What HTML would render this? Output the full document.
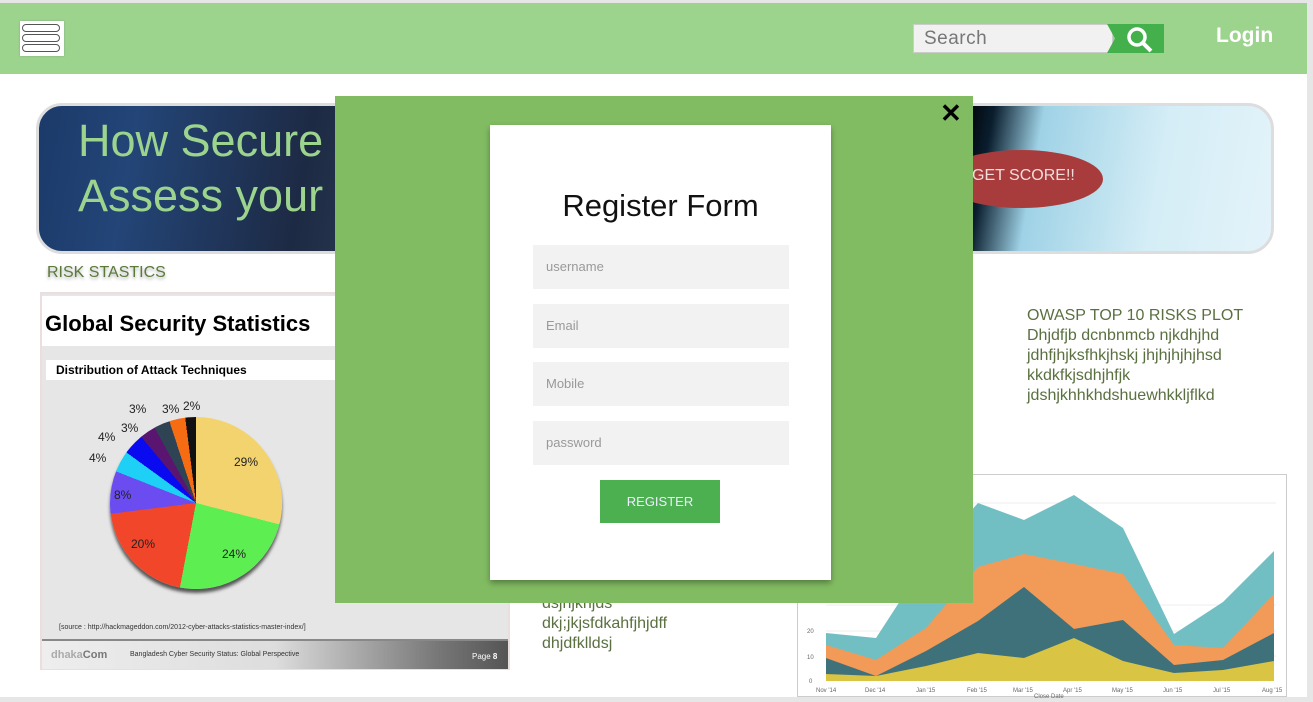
<!DOCTYPE html>
<html><head><meta charset="utf-8"><style>
*{margin:0;padding:0;box-sizing:border-box}
body{width:1313px;height:702px;overflow:hidden;background:#e6e6e6;font-family:"Liberation Sans",sans-serif;position:relative}
.page{position:absolute;left:0;top:3px;width:1307px;height:694px;background:#fff}
.hdr{position:absolute;left:0;top:3px;width:1307px;height:71px;background:#9cd48e}
.ham{position:absolute;left:20px;top:21px;width:44px;height:35px;background:#fff;box-shadow:0 0 2px #8a8}
.ham i{position:absolute;left:2px;width:38px;height:8px;border:1.5px solid #555;border-radius:5px}
.search{position:absolute;left:913px;top:24px;width:200px;height:29px;background:#f1f1f1;border:1px solid #ccc;color:#777;font-size:19px;padding:3px 10px;letter-spacing:.5px}
.sbtn{position:absolute;left:1107px;top:24px;width:57px;height:29px;background:#44b04b;clip-path:polygon(0 0,100% 0,100% 100%,0 100%,8px 50%)}
.login{position:absolute;left:1216px;top:24px;color:#fff;font-size:21px;font-weight:bold}
.banner{position:absolute;left:36px;top:103px;width:1238px;height:151px;border:3px solid #ddd;border-radius:26px;overflow:hidden;background:linear-gradient(100deg,#1b3a6a 0%,#234577 8%,#1d2a44 22%,#3a4660 35%,#14253f 55%,#0a1a2c 68%,#02060c 74%,#0a1e2e 76%,#9fd2e6 80%,#d4edf6 90%,#e4f3fa 100%)}
.btitle{position:absolute;left:78px;top:113px;color:#9cd48e;font-size:45px;line-height:55px}
.score{position:absolute;left:940px;top:150px;width:163px;height:58px;border-radius:50%;background:#a83c3c;color:#f3dcdc;font-size:16px;padding:17px 0 0 32px}
.risk{position:absolute;left:47px;top:264px;color:#5a7a3a;font-size:16px;text-shadow:0 2px 3px #aaa}
.slide{position:absolute;left:40px;top:292px;width:470px;height:378px;background:#e6e6e6;border:2px solid #eadede}
.owasp{position:absolute;left:1027px;top:306px;color:#5a7040;font-size:16px;line-height:20px}
.under{position:absolute;left:542px;top:594px;color:#5a7040;font-size:16px;line-height:20px}
.chart{position:absolute;left:797px;top:474px;width:490px;height:223px;border:1px solid #ccc;background:#fff}
.modal{position:absolute;left:335px;top:96px;width:638px;height:507px;background:#82bc62}
.close{position:absolute;left:940px;top:98px;font-size:26px;font-weight:bold;color:#000}
.card{position:absolute;left:490px;top:125px;width:341px;height:455px;background:#fff;box-shadow:0 3px 6px rgba(0,0,0,.35)}
.card h2{position:absolute;top:63px;width:100%;text-align:center;font-weight:normal;font-size:31px;color:#111}
.inp{position:absolute;left:43px;width:256px;height:44px;background:#f2f2f2;color:#999;font-size:13px;padding:14px 13px}
.reg{position:absolute;left:110px;top:355px;width:120px;height:43px;background:#4caf50;color:#eef;font-size:13px;text-align:center;line-height:43px}
</style></head><body>
<div class="page"></div>
<div class="hdr"></div>
<div class="ham"><i style="top:3px"></i><i style="top:13px"></i><i style="top:23px"></i></div>
<div class="search">Search</div>
<div class="sbtn"><svg width="57" height="29"><circle cx="30" cy="13" r="8" fill="none" stroke="#fff" stroke-width="3.5"/><line x1="36" y1="19" x2="44" y2="27" stroke="#fff" stroke-width="4"/></svg></div>
<div class="login">Login</div>
<div class="banner"></div>
<div class="btitle">How Secure<br>Assess your</div>
<div class="score">GET SCORE!!</div>
<div class="risk">RISK STASTICS</div>
<div class="slide">
 <div style="position:absolute;left:0;top:2px;width:300px;height:50px;background:#fff;font-weight:bold;font-size:22px;padding:15px 3px">Global Security Statistics</div>
 <div style="position:absolute;left:4px;top:66px;width:300px;height:20px;background:#fff;font-weight:bold;font-size:12px;padding:3px 10px">Distribution of Attack Techniques</div>
 <div style="position:absolute;left:68px;top:123px;width:172px;height:172px;border-radius:50%;box-shadow:0 4px 3px #555;background:conic-gradient(#f2d36e 0 29%,#5def52 29% 53%,#f2462b 53% 73%,#6a4cf0 73% 81%,#1ed0f5 81% 85%,#0a0af0 85% 89%,#5a1570 89% 92%,#2e4455 92% 95%,#f56c12 95% 98%,#111 98% 100%)"></div>
 <div style="position:absolute;font-size:12px;color:#222">
  <span style="position:absolute;left:192px;top:161px">29%</span>
  <span style="position:absolute;left:180px;top:253px">24%</span>
  <span style="position:absolute;left:89px;top:243px">20%</span>
  <span style="position:absolute;left:72px;top:194px">8%</span>
  <span style="position:absolute;left:47px;top:157px">4%</span>
  <span style="position:absolute;left:56px;top:136px">4%</span>
  <span style="position:absolute;left:79px;top:127px">3%</span>
  <span style="position:absolute;left:87px;top:108px">3%</span>
  <span style="position:absolute;left:120px;top:108px">3%</span>
  <span style="position:absolute;left:141px;top:105px">2%</span>
 </div>
 <div style="position:absolute;left:17px;top:330px;font-size:7px;color:#333">[source : http://hackmageddon.com/2012-cyber-attacks-statistics-master-index/]</div>
 <div style="position:absolute;left:0;top:345px;width:466px;height:30px;background:linear-gradient(90deg,#eee 0%,#ddd 50%,#777 85%,#555 100%);border-top:2px solid #888"></div>
 <div style="position:absolute;left:9px;top:355px;font-size:11px;font-weight:bold;color:#aaa">dhaka<span style="color:#777">Com</span></div>
 <div style="position:absolute;left:88px;top:357px;font-size:7px;color:#333">Bangladesh Cyber Security Status: Global Perspective</div>
 <div style="position:absolute;left:430px;top:358px;font-size:8px;color:#fff">Page <b>8</b></div>
</div>
<div class="owasp">OWASP TOP 10 RISKS PLOT<br>Dhjdfjb dcnbnmcb njkdhjhd<br>jdhfjhjksfhkjhskj jhjhjhjhjhsd<br>kkdkfkjsdhjhfjk<br>jdshjkhhkhdshuewhkkljflkd</div>
<div class="under">dsjhjkhjds<br>dkj;jkjsfdkahfjhjdff<br>dhjdfklldsj</div>
<div class="chart"><svg width="490" height="223" viewBox="797 474 490 223" style="display:block">
<g stroke="#eee"><line x1="825" y1="655" x2="1275" y2="655"/><line x1="825" y1="630" x2="1275" y2="630"/><line x1="825" y1="604" x2="1275" y2="604"/><line x1="825" y1="502" x2="1275" y2="502"/></g>
<polygon fill="#72bfc3" points="825,632 875,637 925,560 977,502 1023,519 1073,494 1122,527 1173,633 1222,601 1273,550 1273,680 825,680"/>
<polygon fill="#f29a57" points="825,644 875,659 925,627 977,566 1023,553 1073,563 1122,573 1173,644 1222,647 1273,593 1273,680 825,680"/>
<polygon fill="#3f717b" points="825,657 875,675 925,650 977,620 1023,586 1073,628 1122,619 1173,664 1222,659 1273,632 1273,680 825,680"/>
<polygon fill="#dac444" points="825,673 875,675 925,665 977,652 1023,657 1073,637 1122,660 1173,672 1222,669 1273,660 1273,680 825,680"/>
<g font-size="6" fill="#666" font-family="Liberation Sans"><text x="808" y="682">0</text><text x="806" y="658">10</text><text x="806" y="632">20</text>
<text x="815" y="691">Nov '14</text><text x="864" y="691">Dec '14</text><text x="915" y="691">Jan '15</text><text x="966" y="691">Feb '15</text><text x="1012" y="691">Mar '15</text><text x="1062" y="691">Apr '15</text><text x="1111" y="691">May '15</text><text x="1162" y="691">Jun '15</text><text x="1212" y="691">Jul '15</text><text x="1261" y="691">Aug '15</text><text x="1033" y="697">Close Date</text></g>
</svg></div>
<div class="modal"></div>
<div class="close">✕</div>
<div class="card">
 <h2>Register Form</h2>
 <div class="inp" style="top:120px">username</div>
 <div class="inp" style="top:179px">Email</div>
 <div class="inp" style="top:237px">Mobile</div>
 <div class="inp" style="top:296px">password</div>
 <div class="reg">REGISTER</div>
</div>
</body></html>
